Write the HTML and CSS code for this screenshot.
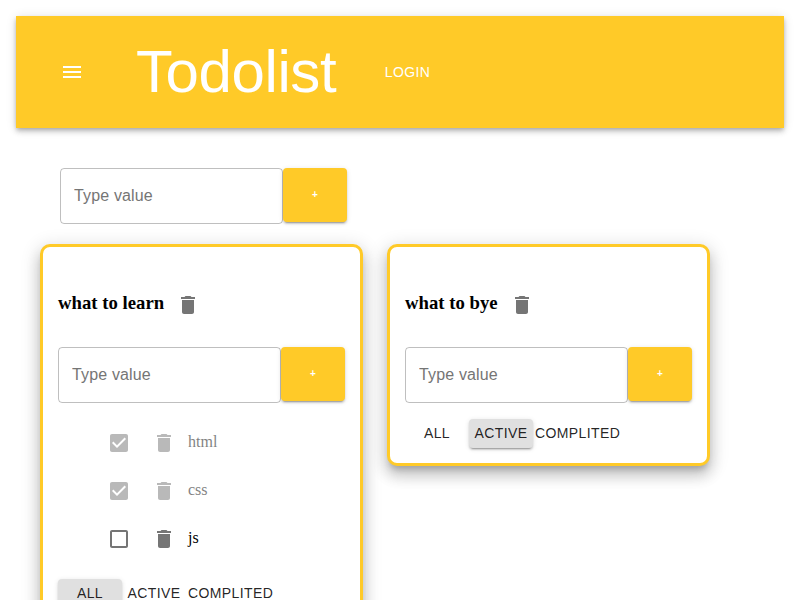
FILE: index.html
```html
<!DOCTYPE html>
<html lang="en">
<head>
<meta charset="utf-8">
<title>Todolist</title>
<link rel="stylesheet" href="styles.css">
</head>
<body>
<svg class="defs" aria-hidden="true">
  <symbol id="trash" viewBox="0 0 24 24"><path d="M6 19c0 1.1.9 2 2 2h8c1.1 0 2-.9 2-2V7H6v12zM19 4h-3.500l-1-1h-5l-1 1H5v2h14V4z"/></symbol>
  <symbol id="checked" viewBox="0 0 24 24"><path d="M19 3H5c-1.110 0-2 .9-2 2v14c0 1.100.89 2 2 2h14c1.110 0 2-.9 2-2V5c0-1.100-.89-2-2-2zm-9 14l-5-5 1.410-1.410L10 14.170l7.590-7.590L19 8l-9 9z"/></symbol>
  <symbol id="unchecked" viewBox="0 0 24 24"><path d="M19 5v14H5V5h14m0-2H5c-1.100 0-2 .9-2 2v14c0 1.100.9 2 2 2h14c1.100 0 2-.9 2-2V5c0-1.100-.9-2-2-2z"/></symbol>
</svg>
<header class="app-bar">
  <button class="icon-button menu" aria-label="Menu"><svg viewBox="0 0 24 24"><path d="M3 18h18v-2H3v2zm0-5h18v-2H3v2zm0-7v2h18V6H3z"/></svg></button>
  <h1 class="title">Todolist</h1>
  <button class="login">Login</button>
</header>
<main class="content">
  <div class="add-form add-list"><input class="field" placeholder="Type value"><button class="add">+</button></div>
  <div class="lists">
    <section class="card">
      <h3 class="card-title"><span>what to learn</span><button class="icon-button" aria-label="Delete"><svg><use href="#trash"/></svg></button></h3>
      <div class="add-form"><input class="field" placeholder="Type value"><button class="add">+</button></div>
      <ul class="tasks">
        <li class="task done"><button class="icon-button check" aria-label="Done"><svg><use href="#checked"/></svg></button><button class="icon-button" aria-label="Delete"><svg><use href="#trash"/></svg></button><span>html</span></li>
        <li class="task done"><button class="icon-button check" aria-label="Done"><svg><use href="#checked"/></svg></button><button class="icon-button" aria-label="Delete"><svg><use href="#trash"/></svg></button><span>css</span></li>
        <li class="task"><button class="icon-button check" aria-label="Done"><svg><use href="#unchecked"/></svg></button><button class="icon-button" aria-label="Delete"><svg><use href="#trash"/></svg></button><span>js</span></li>
      </ul>
      <div class="filters"><button class="filter selected">All</button><button class="filter">Active</button><button class="filter">Complited</button></div>
    </section>
    <section class="card">
      <h3 class="card-title"><span>what to bye</span><button class="icon-button" aria-label="Delete"><svg><use href="#trash"/></svg></button></h3>
      <div class="add-form"><input class="field" placeholder="Type value"><button class="add">+</button></div>
      <ul class="tasks"></ul>
      <div class="filters"><button class="filter">All</button><button class="filter selected">Active</button><button class="filter">Complited</button></div>
    </section>
  </div>
</main>
</body>
</html>
```
FILE: styles.css
```css
* { box-sizing: border-box; }
html { height: 100%; overflow: hidden; }
body { margin: 0; padding: 16px; height: 100%; overflow: hidden; font-family: "Liberation Serif", serif; font-size: 16px; background: #fff; color: #000; }
button { border: 0; margin: 0; background: none; font-family: "Liberation Sans", Arial, sans-serif; }
.defs { display: none; }
.app-bar { display: flex; align-items: center; height: 112px; padding: 0 32px; background: #ffca28; color: #fff;
  box-shadow: 0 2px 4px -1px rgba(0,0,0,.2), 0 4px 5px 0 rgba(0,0,0,.14), 0 1px 10px 0 rgba(0,0,0,.12); }
.icon-button { display: block; flex: none; width: 48px; height: 48px; padding: 12px; color: #757575; }
.icon-button svg { display: block; width: 24px; height: 24px; fill: currentColor; }
.menu { color: inherit; }
.title { margin: 0 0 0 40px; font: 400 60px/72px "Liberation Sans", Arial, sans-serif; letter-spacing: -.4px; }
.login { margin-left: 40.500px; padding: 6px 8px; color: #fff; font-size: 14px; line-height: 24.5px; letter-spacing: .4px; text-transform: uppercase; }
.content { padding: 40px 24px 0; }
.add-form { display: flex; align-items: flex-start; height: 56px; }
.add-list { margin: 0 0 20px 20px; }
.field { width: 223px; height: 56px; padding: 18px 13px; border: 1px solid rgba(0,0,0,.25); border-radius: 4px; outline: 0; font: 16px "Liberation Sans", Arial, sans-serif; letter-spacing: .15px; background: none; }
.field::placeholder { color: #757575; opacity: 1; }
.add { width: 64px; height: 54px; padding: 0 0 2px; border-radius: 4px; background: #ffca28; color: #fff; font-size: 10px; font-weight: 700;
  box-shadow: 0 3px 1px -2px rgba(0,0,0,.2), 0 2px 2px 0 rgba(0,0,0,.14), 0 1px 5px 0 rgba(0,0,0,.12); }
.lists { display: flex; align-items: flex-start; gap: 24px; }
.card { width: 323px; padding: 15px; border: 3px solid #ffca28; border-radius: 10px; background: #fff;
  box-shadow: 0 6px 6px -3px rgba(0,0,0,.2), 0 10px 14px 1px rgba(0,0,0,.14), 0 4px 18px 3px rgba(0,0,0,.12); }
.card-title { display: flex; align-items: center; height: 48px; margin: 19px 0 18px; font-size: 18.72px; line-height: 22px; }
.card-title span { padding-bottom: 4px; letter-spacing: .02px; }
.tasks { margin: 16px 0; padding: 0 0 0 40px; list-style: none; }
.tasks:empty { margin-bottom: 0; }
.task { display: flex; align-items: center; height: 48px; }
.task span { padding-bottom: 2px; }
.done { opacity: .5; }
.check { width: 42px; padding: 9px; }
.filters { display: flex; }
.filter { min-width: 64px; height: 29px; padding: 2px; border-radius: 4px; color: rgba(0,0,0,.87); font-size: 14px; line-height: 24.5px; letter-spacing: .4px; text-transform: uppercase; }
.selected { background: #e0e0e0; box-shadow: 0 3px 1px -2px rgba(0,0,0,.2), 0 2px 2px 0 rgba(0,0,0,.14), 0 1px 5px 0 rgba(0,0,0,.12); }
```
